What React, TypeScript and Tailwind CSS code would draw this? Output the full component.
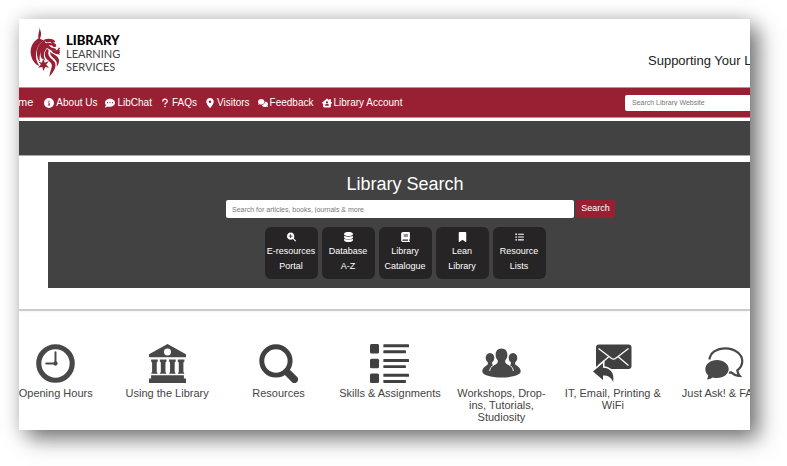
import React from 'react';
import {
  FaBook,
  FaBookmark,
  FaCircleInfo,
  FaCommentDots,
  FaComments,
  FaDatabase,
  FaHouseChimneyUser,
  FaListUl,
  FaLocationDot,
  FaMagnifyingGlassPlus,
  FaQuestion,
} from 'react-icons/fa6';

const navLinks = [
  { name: 'About Us', icon: FaCircleInfo },
  { name: 'LibChat', icon: FaCommentDots },
  { name: 'FAQs', icon: FaQuestion },
  { name: 'Visitors', icon: FaLocationDot },
  { name: 'Feedback', icon: FaComments },
  { name: 'Library Account', icon: FaHouseChimneyUser },
];

const searchTiles = [
  { lines: ['E-resources', 'Portal'], icon: FaMagnifyingGlassPlus },
  { lines: ['Database', 'A-Z'], icon: FaDatabase },
  { lines: ['Library', 'Catalogue'], icon: FaBook },
  { lines: ['Lean', 'Library'], icon: FaBookmark },
  { lines: ['Resource', 'Lists'], icon: FaListUl },
];

const LionLogo = () => (
  <svg className="h-[51px] w-[31px]" viewBox="90 78 94 152" fill="#991f33" aria-hidden="true">
    <path d="M120 79c-1 10 6 17 3 27-2 6-3 8-2 14-4-4-7-8-6-14 1-10 4-16 5-27z" />
    <path d="M117 113c-16 9-26 25-25 44 1 20 12 35 27 42-9-14-13-28-10-43 2-15 10-26 24-36-6-1-11-3-16-7z" />
    <path d="M134 120c-14 8-22 20-23 35-1 14 3 24 9 32-2-14-1-25 5-35 5-9 11-15 15-22-4-2-5-5-6-10z" />
    <path d="M138 132c-12 12-18 23-16 34 1 8 7 13 15 16-5-8-6-16-4-24 2-7 6-12 10-16-3-2-5-6-5-10z" />
    <path d="M143 144c-9 10-11 22-4 31 7 9 16 11 17 21 1 9-6 19-7 34 8-10 16-20 18-30 3-16-9-20-16-28-6-7-7-13-4-21-3-2-4-4-4-7z" />
    <path d="M151 155c-1 10 5 15 12 21 7 5 10 12 8 24 8-10 10-21 2-30-5-6-16-8-22-15z" />
    <path d="M131 119c9-5 22-5 32 0l4 7-8 1 9 4 2 8-8 2-5-5-11-2 9 8 13 4 1 5c-12 2-21-2-28-9-6-6-10-9-10-15 5 3 8 2 13 1-5-3-9-5-13-9z" />
    <path d="M154 148c8 5 15 4 21-1l2-6 4 3-3 6 4 1-3 4 3 2-4 3 3 4-7-2c-9 0-17-5-20-14z" />
    <path
      d="M130 177l5 11 12-5-8 11 9 9-12-2-5 12-4-12-12 2 8-10-8-9 11 4z"
      stroke="white"
      strokeWidth="3"
      paintOrder="stroke"
    />
    <path d="M138 126l13-1 6 4-8-1z" fill="white" />
  </svg>
);

const ClockIcon = () => (
  <svg className="h-[39px] w-[39px]" viewBox="0 0 38 38" fill="none" stroke="#484848" aria-hidden="true">
    <circle cx="19" cy="19" r="16.3" strokeWidth="5" />
    <path d="M19 8v11H10" strokeWidth="1.9" strokeLinecap="round" />
    <circle cx="19" cy="19" r="1.6" fill="#484848" />
  </svg>
);

const LibraryIcon = () => (
  <svg className="h-[39px] w-[39px]" viewBox="0 0 38 38" fill="#484848" aria-hidden="true">
    <path
      fillRule="evenodd"
      d="M19 0l18 10v3H1v-3zM19 4.5a3.4 3.4 0 1 0 0 6.800 3.400 3.400 0 0 0 0-6.800z"
    />
    <path d="M3 15h6.500v2l-1 1v9l1 2H3l1-2v-9l-1-1zM11.500 15H18v2l-1 1v9l1 2h-6.500l1-2v-9l-1-1zM20.500 15H27v2l-1 1v9l1 2h-6.500l1-2v-9l-1-1zM29 15h6.500v2l-1 1v9l1 2H29l1-2v-9l-1-1z" />
    <path d="M3 30.500h32v3h2V38H1v-4.500h2z" />
  </svg>
);

const MagnifierIcon = () => (
  <svg className="h-[39px] w-[39px]" viewBox="0 0 38 38" fill="none" stroke="#404040" aria-hidden="true">
    <circle cx="16.5" cy="16.5" r="13.8" strokeWidth="4.8" />
    <path d="M27 27l7.500 7.500" strokeWidth="7" strokeLinecap="round" />
  </svg>
);

const ListIcon = () => (
  <svg className="h-[39px] w-[39px]" viewBox="0 0 38 38" fill="#404040" aria-hidden="true">
    {[0, 14.4, 28.8].map((y) => (
      <g key={y}>
        <rect x="0" y={y} width="8.8" height="9.2" rx="1.5" />
        <rect x="13" y={y + 0.3} width="25" height="2.9" rx="0.6" />
        <rect x="13" y={y + 6.2} width="22" height="2.9" rx="0.6" />
      </g>
    ))}
  </svg>
);

const PeopleIcon = () => (
  <svg className="h-[39px] w-[39px]" viewBox="0 0 39 39" fill="#484848" aria-hidden="true">
    <path d="M8 9c-2.700 0-4.300 2.200-4.300 4.800 0 2 .9 3.600 2.100 4.500.4 1.600-.2 2.500-1.700 3.500C1.700 23.400.3 25 .3 27.500.3 31 9 33.500 19.500 33.500S38.700 31 38.700 27.500c0-2.500-1.400-4.100-3.800-5.700-1.500-1-2.100-1.900-1.700-3.500 1.200-.9 2.100-2.500 2.100-4.500 0-2.600-1.600-4.800-4.300-4.800s-4.300 2.200-4.300 4.800c0 2 .9 3.600 2.100 4.500.4 1.500 0 2.300-1 3.100-3.300-1.200-5-2.300-4.600-5 1.300-1.200 2.200-3.200 2.200-5.600 0-3.500-2-6.300-5.900-6.300s-5.900 2.800-5.900 6.300c0 2.400.9 4.400 2.200 5.600.4 2.700-1.300 3.800-4.600 5-1-.8-1.400-1.600-1-3.100 1.200-.9 2.100-2.500 2.100-4.500C12.300 11.200 10.700 9 8 9z" />
    <path
      d="M7.700 27c.3-3 1.500-4.700 4.100-5.700M31.300 27c-.3-3-1.500-4.700-4.100-5.700"
      fill="none"
      stroke="white"
      strokeWidth="0.9"
    />
  </svg>
);

const MailReplyIcon = () => (
  <svg className="h-[39px] w-[39px]" viewBox="0 0 39 39" aria-hidden="true">
    <rect x="3" y="0.5" width="35.5" height="24.5" rx="3" fill="#404040" />
    <path
      d="M5.500 4.500l12.700 9.700c1.500 1.200 3.100 1.200 4.600 0L35.500 4.500M5.500 21.500l10-8.500M35.500 21.500l-10-8.500"
      fill="none"
      stroke="white"
      strokeWidth="1.3"
    />
    <path
      d="M0 27.500L10 19v4.800c7.500.2 11.500 5.200 10.200 14.200-2-4.800-5-6.600-10.200-6.600V36z"
      fill="#404040"
      stroke="white"
      strokeWidth="3"
      paintOrder="stroke"
    />
  </svg>
);

const ChatIcon = () => (
  <svg className="h-[39px] w-[39px]" viewBox="0 0 39 39" aria-hidden="true">
    <path
      d="M4.500 15.500C5 9 11.500 4.300 20.500 4.300S37.300 10 37.300 17c0 4-2 7-5 9.300.2 2.200 1 3.900 2.500 5.700-3.800-.2-6.500-1.600-8.300-3.500l-3 .2"
      fill="none"
      stroke="#484848"
      strokeWidth="2.2"
    />
    <path
      d="M12 16C5.500 16 .3 20 .3 25c0 2.700 1.300 5 2.900 6.300-.1 1.500-.5 2.700-1.200 4.100 2.400-.2 4.300-.9 5.700-2 1.300.3 2.900.6 4.300.6 6.500 0 11.700-4 11.700-9S18.500 16 12 16z"
      fill="#484848"
      stroke="white"
      strokeWidth="2"
      paintOrder="stroke"
    />
  </svg>
);

const services = [
  { name: 'Opening Hours', icon: ClockIcon },
  { name: 'Using the Library', icon: LibraryIcon },
  { name: 'Resources', icon: MagnifierIcon },
  { name: 'Skills & Assignments', icon: ListIcon },
  { name: 'Workshops, Drop-ins, Tutorials, Studiosity', icon: PeopleIcon },
  { name: 'IT, Email, Printing & WiFi', icon: MailReplyIcon },
  { name: 'Just Ask! & FAQs', icon: ChatIcon },
];

const Header = () => (
  <header className="flex h-[68px] items-start justify-between pl-[11px] pt-[7px]">
    <a href="#" className="flex items-start gap-[5px]">
      <LionLogo />
      <span className="flex flex-col pt-2 font-['Lato',sans-serif] text-[11px] leading-[13px] text-[#444]">
        <span className="text-[13px] font-black text-black">LIBRARY</span>
        <span>LEARNING</span>
        <span>SERVICES</span>
      </span>
    </a>
    <p className="w-[102px] overflow-hidden whitespace-nowrap pt-[27px] text-[13px] leading-4 text-[#222]">
      Supporting Your Learning
    </p>
  </header>
);

const NavBar = () => (
  <nav className="flex h-[31px] items-center justify-between border-y border-[#c98a95] bg-[#991f33] text-white">
    <div className="-ml-[15px] flex items-center gap-2 whitespace-nowrap text-[10px]">
      <a href="#" className="mr-[3px] text-[11px]">Home</a>
      {navLinks.map(({ name, icon: Icon }) => (
        <a key={name} href="#" className="flex items-center gap-[2px] hover:underline">
          <Icon className="h-[10px] w-auto" />
          {name}
        </a>
      ))}
    </div>
    <input
      type="text"
      aria-label="Search Library Website"
      placeholder="Search Library Website"
      className="h-4 w-[125px] rounded-l-xs bg-white px-[7px] text-[7px] text-gray-700 placeholder:text-[#777]"
    />
  </nav>
);

const LibrarySearch = () => (
  <section className="ml-[29px] flex flex-col items-center bg-[#424242] pb-[9px] pl-3 pt-[10px] text-white">
    <h1 className="text-[18px] leading-6">Library Search</h1>
    <form className="ml-[31px] mt-1 flex gap-[2px]" onSubmit={(e) => e.preventDefault()}>
      <input
        type="text"
        aria-label="Search the library"
        placeholder="Search for articles, books, journals & more"
        className="h-[18px] w-[348px] rounded-xs bg-white px-[6px] text-[7px] text-gray-700 placeholder:text-[#777]"
      />
      <button type="submit" className="h-[18px] w-[39px] rounded-xs bg-[#991f33] text-[9px]">
        Search
      </button>
    </form>
    <div className="mt-[9px] flex gap-1">
      {searchTiles.map(({ lines, icon: Icon }) => (
        <a
          key={lines[0]}
          href="#"
          className="flex h-[52px] w-[53px] flex-col items-center rounded-md bg-[#262424] pt-[5px] text-[9px] leading-[15px]"
        >
          <Icon className="mb-[2px] h-[10px]" />
          {lines.map((line) => (
            <span key={line}>{line}</span>
          ))}
        </a>
      ))}
    </div>
  </section>
);

const Services = () => (
  <section className="-ml-[19px] grid w-[calc(100%+49px)] grid-cols-7 pb-[7px] pt-[33px]">
    {services.map(({ name, icon: Icon }) => (
      <a key={name} href="#" className="flex flex-col items-center text-center text-[11px] leading-3 text-[#444]">
        <Icon />
        <span className="mt-1 max-w-[104px]">{name}</span>
      </a>
    ))}
  </section>
);

export default function App() {
  return (
    <div className="overflow-hidden bg-white pb-9 pl-[19px] pr-[37px] pt-[19px] font-['Liberation_Sans',Arial,sans-serif]">
      <main className="overflow-hidden bg-white shadow-[9px_9px_20px_rgba(0,0,0,0.5),0_0_18px_rgba(0,0,0,0.16)]">
        <Header />
        <NavBar />
        <div className="mt-[3px] h-[35px] border-b border-[#aaa] bg-[#424242]" />
        <div className="border-b-2 border-[#ccc] pb-[21px] pt-[6px] shadow-xs">
          <LibrarySearch />
        </div>
        <Services />
      </main>
    </div>
  );
}
